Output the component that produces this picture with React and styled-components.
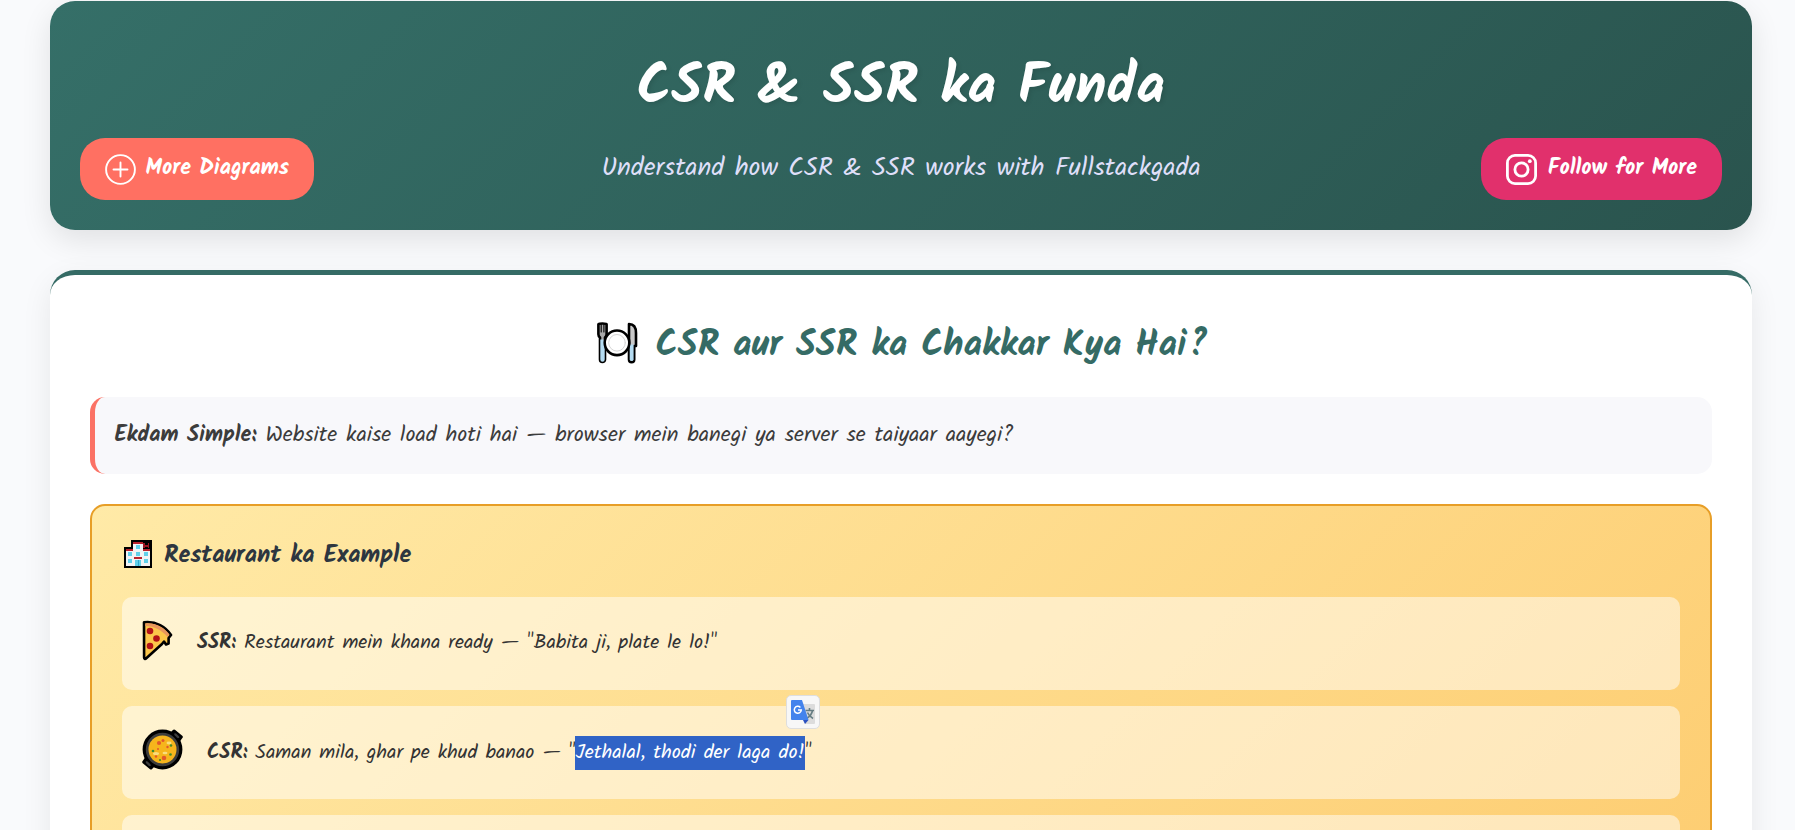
import React from "react";
import styled, { createGlobalStyle } from "styled-components";

const GlobalStyle = createGlobalStyle`
  * { box-sizing: border-box; }
  body {
    margin: 0;
    background: #f9fafc;
    color: #333;
    font-family: Kalam, cursive;
  }
`;

const Page = styled.main`
  height: 830px;
  overflow: hidden;
  padding: 1px 43px 0 50px;
`;

const Header = styled.header`
  display: grid;
  grid-template-columns: 1fr auto 1fr;
  grid-template-rows: 80px 62px;
  row-gap: 10px;
  height: 229px;
  padding: 47px 30px 30px;
  border-radius: 25px;
  background: linear-gradient(135deg, #356f68 0%, #2a544e 100%);
  box-shadow: 0 10px 30px rgba(0, 0, 0, 0.1);
`;

const Title = styled.h1`
  grid-column: 1 / -1;
  margin: 0;
  text-align: center;
  color: #fff;
  font-size: 56px;
  line-height: 80px;
  text-shadow: 2px 2px 4px rgba(0, 0, 0, 0.1);
`;

const Subtitle = styled.p`
  margin: 10px 0 0;
  color: #dfdff9;
  font-size: 26px;
  line-height: 40px;
`;

const PillButton = styled.a`
  display: flex;
  align-items: center;
  gap: ${(p) => p.$gap}px;
  height: 62px;
  padding: 0 25px;
  justify-self: ${(p) => p.$side};
  border-radius: 25px;
  background: ${(p) => p.$color};
  color: #fff;
  font-size: 22px;
  font-weight: 700;
  line-height: 62px;
  white-space: nowrap;

  svg { flex: none; }
`;

const Section = styled.section`
  height: 900px;
  margin-top: 40px;
  padding: 41px 40px 0;
  border-top: 5px solid #356b65;
  border-radius: 25px;
  background: #fff;
  box-shadow: 0 10px 30px rgba(0, 0, 0, 0.08);
`;

const SectionTitle = styled.h2`
  display: flex;
  justify-content: center;
  align-items: center;
  gap: 18px;
  margin: 0 0 21px;
  padding-left: 2px;
  color: #356b65;
  font-size: 36px;
  line-height: 60px;

  svg { margin-bottom: 7px; }
`;

const Callout = styled.p`
  height: 77px;
  margin: 0 0 30px;
  padding: 21px 20px 0 19.5px;
  border-left: 5px solid #fb7265;
  border-radius: 15px;
  background: #f8f8fb;
  color: #3c3c3c;
  font-size: 22px;
  line-height: 36px;
`;

const ExampleCard = styled.div`
  height: 520px;
  padding: 30px 30px 0;
  border: 2px solid #e79e27;
  border-radius: 15px;
  background: linear-gradient(135deg, #ffeaa7 0%, #fdcb6e 100%);
`;

const ExampleTitle = styled.h3`
  display: flex;
  align-items: center;
  gap: 12px;
  margin: 0 0 21px;
  padding-left: 2px;
  color: #2d3640;
  font-size: 24px;
  line-height: 40px;

  svg { margin-bottom: 5px; }
`;

const List = styled.div`
  display: flex;
  flex-direction: column;
  gap: 16px;
`;

const Row = styled.div`
  display: flex;
  align-items: flex-start;
  gap: 24px;
  height: 93px;
  padding: 0 20px;
  border-radius: 10px;
  background: rgba(255, 255, 255, 0.5);
  font-size: 20px;

  > svg { flex: none; margin-top: 23px; }
`;

const RowText = styled.div`
  padding-top: ${(p) => p.$top}px;
  line-height: 34px;
  white-space: nowrap;
`;

const Selected = styled.span`
  position: relative;
  display: inline-block;
  background: #3063c6;
  color: #fff;
`;

const TranslateBubble = styled.span`
  position: absolute;
  right: -15px;
  top: -41px;
  display: grid;
  place-items: center;
  width: 34px;
  height: 34px;
  border: 1px solid #dedede;
  border-radius: 5px;
  background: #f7f7f7;
`;

const PlusIcon = () => (
  <svg width="31" height="31" viewBox="0 0 31 31" fill="none" stroke="#fff" strokeWidth="1.9" strokeLinecap="round">
    <circle cx="15.5" cy="15.5" r="14.4" />
    <path d="M15.5 8.5v14M8.5 15.5h14" />
  </svg>
);

const InstagramIcon = () => (
  <svg width="31" height="31" viewBox="0 0 31 31" fill="none" stroke="#fff" strokeWidth="2.8">
    <rect x="1.4" y="1.4" width="28.2" height="28.2" rx="7.6" />
    <circle cx="15.5" cy="15.5" r="6.6" />
    <circle cx="23.8" cy="7.2" r="1.9" fill="#fff" stroke="none" />
  </svg>
);

const PlateIcon = () => (
  <svg width="42" height="42" viewBox="0 0 42 42" stroke="#000" strokeLinejoin="round" strokeLinecap="round">
    <path d="M2.4 2.2v10c0 1.800.8 2.600 1.600 3.300V37.500a2.500 2.500 0 0 0 5 0V15.500c.8-.7 1.600-1.500 1.600-3.300v-10c0-.9-8.200-.9-8.200 0z" fill="#a9a9a9" strokeWidth="2.600" />
    <path d="M4.300 17.500h4.400v20a2.200 2.200 0 0 1-4.400 0z" fill="#b5dcf2" stroke="none" />
    <path d="M5.200 2.500v7.500M7.900 2.500v7.500" strokeWidth="1.100" />
    <path d="M33 2c5.500 0 7 4.500 7 9v13h-1.800v13.500a2.500 2.500 0 0 1-5.200 0z" fill="#c9c9c9" strokeWidth="2.600" />
    <path d="M33.700 22.500h3.900v15a2 2 0 0 1-3.900 0z" fill="#b5dcf2" stroke="none" />
    <circle cx="21" cy="20.800" r="12.300" fill="#fff" strokeWidth="2.600" />
    <circle cx="21" cy="20.800" r="8.300" fill="#fff" stroke="#d5d5d5" strokeWidth="1" />
  </svg>
);

const BuildingIcon = () => (
  <svg width="28" height="28" viewBox="0 0 28 28" shapeRendering="crispEdges">
    <path d="M0 7h7V0h21v28H0z" fill="#000" />
    <path d="M2 9h7V2h10v7h7v17H2z" fill="#f1f3f5" />
    <path d="M2 9h7v1.5H2zM9 2h10v1.5H9zM19 9h7v1.5h-7zM10 17h8v2h-8z" fill="#b9202c" />
    <path d="M19 3h1.5v2h3V3H25v5h-1.5V6.5h-3V8H19z" fill="#9c1522" />
    <path d="M12 5h4v4h-4zM12 12h4v4h-4zM4 12h4v4H4zM20 12h4v4h-4zM4 19h4v4H4zM20 19h4v4h-4zM11 20h6v6h-6z" fill="#61cfea" />
    <path d="M13.6 20h1v6h-1z" fill="#2fa9d0" />
  </svg>
);

const PizzaIcon = () => (
  <svg width="31" height="41" viewBox="0 0 31 41" strokeLinejoin="round">
    <path d="M2 2.200c12-1.500 22 4.800 27 12.800l-2.400 3v5.500l-2.600 1-2-3-2 2.500L4 38.500c-.8.8-1.900.3-1.900-1z" fill="#fcc64a" stroke="#000" strokeWidth="2.600" />
    <path d="M3.300 3.400c10.700-1.200 19.200 4.600 24.200 11.100l-2 2.500C20 10 12 5.900 3.300 5.900z" fill="#e9965c" />
    <g fill="#b31217">
      <circle cx="8" cy="11" r="3.3" />
      <circle cx="14.5" cy="18.5" r="3.3" />
      <circle cx="8" cy="26" r="3.3" />
    </g>
  </svg>
);

const PanIcon = () => (
  <svg width="41" height="41" viewBox="0 0 41 41">
    <g fill="#3d3d3d" stroke="#000" strokeWidth="3" strokeLinejoin="round">
      <path d="M29 5l3-3 7.300 6-2.800 4z" />
      <path d="M12 36l-3 3-7.300-6 2.800-4z" />
    </g>
    <circle cx="20.5" cy="20.5" r="18.3" fill="#3d3d3d" stroke="#000" strokeWidth="3.2" />
    <path d="M33.5 5.5l2.5 2.500M5 33.500l2.500 2.500" stroke="#3d3d3d" strokeWidth="2.4" strokeLinecap="round" />
    <circle cx="20.5" cy="20.5" r="14" fill="#f6b51c" />
    <g fill="#f9dd7c">
      <ellipse cx="14" cy="24.5" rx="3" ry="1.5" />
      <ellipse cx="27" cy="14" rx="2.5" ry="1.4" />
      <ellipse cx="23" cy="24" rx="2.5" ry="1.3" />
    </g>
    <g fill="#e2592a">
      <circle cx="17" cy="14" r="2.1" />
      <circle cx="21" cy="11.5" r="1.5" />
      <circle cx="25.5" cy="18" r="1.2" />
      <circle cx="22" cy="29" r="2.3" />
      <circle cx="14" cy="27.5" r="1.2" />
      <circle cx="16" cy="20" r="1" />
    </g>
    <g fill="#3f8b2f">
      <circle cx="11" cy="22" r="1.3" />
      <circle cx="29" cy="16.5" r="1.3" />
      <circle cx="28.5" cy="25.5" r="1.3" />
      <circle cx="18" cy="31" r="1.1" />
    </g>
  </svg>
);

const TranslateIcon = () => (
  <svg width="24" height="24" viewBox="0 0 24 24" fill="none">
    <path d="M9 4h14a1 1 0 0 1 1 1v18a1 1 0 0 1-1 1h-9z" fill="#dcdcdc" />
    <path d="M14.5 10.500h8.500M18.500 8v2.500M21.500 10.500c-.6 3.500-2.500 6-6 8M16.500 12.500c1 2.500 2.800 4.500 5.500 6" stroke="#667d83" strokeWidth="1.6" />
    <path d="M12 20h5.5L14 24z" fill="#2a50c0" />
    <path d="M1 0h10l6.5 20H1a1 1 0 0 1-1-1V1a1 1 0 0 1 1-1z" fill="#4483ec" />
    <path d="M9.4 7.4A3.5 3.5 0 1 0 10.3 10H7" stroke="#fff" strokeWidth="1.5" />
  </svg>
);

export default function App() {
  return (
    <>
      <GlobalStyle />
      <Page>
        <Header>
          <Title>CSR &amp; SSR ka Funda</Title>
          <PillButton $color="#ff7062" $side="start" $gap={9.5}>
            <PlusIcon />
            More Diagrams
          </PillButton>
          <Subtitle>Understand how CSR &amp; SSR works with Fullstackgada</Subtitle>
          <PillButton $color="#e1306c" $side="end" $gap={10.5}>
            <InstagramIcon />
            Follow for More
          </PillButton>
        </Header>

        <Section>
          <SectionTitle>
            <PlateIcon />
            CSR aur SSR ka Chakkar Kya Hai?
          </SectionTitle>
          <Callout>
            <strong>Ekdam Simple:</strong> Website kaise load hoti hai — browser mein banegi ya
            server se taiyaar aayegi?
          </Callout>
          <ExampleCard>
            <ExampleTitle>
              <BuildingIcon />
              Restaurant ka Example
            </ExampleTitle>
            <List>
              <Row>
                <PizzaIcon />
                <RowText $top={29}>
                  <strong>SSR:</strong> Restaurant mein khana ready — "Babita ji, plate le lo!"
                </RowText>
              </Row>
              <Row>
                <PanIcon />
                <RowText $top={30}>
                  <strong>CSR:</strong> Saman mila, ghar pe khud banao — "
                  <Selected>
                    Jethalal, thodi der laga do!
                    <TranslateBubble>
                      <TranslateIcon />
                    </TranslateBubble>
                  </Selected>
                  "
                </RowText>
              </Row>
              <Row />
            </List>
          </ExampleCard>
        </Section>
      </Page>
    </>
  );
}
